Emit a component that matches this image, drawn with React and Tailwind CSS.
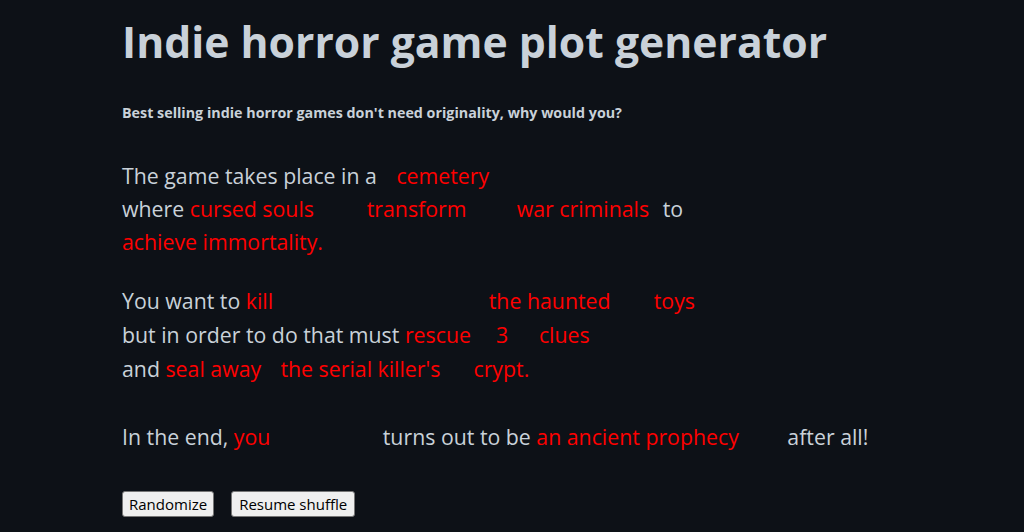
import React from "react"

function Slot({ w, children }) {
    return (
        <span className={`inline-block align-baseline text-[#ff0000] whitespace-nowrap ${w}`}>{children}</span>
    )
}

export default function App() {
    return (
        <div className="min-h-screen bg-[#0d1117] text-[#c9d1d9]" style={{ fontFamily: '"Open Sans", "Noto Sans", sans-serif' }}>
            <main className="max-w-[780px] mx-auto pt-[14px]">
                <h1 className="text-[42.7px] font-bold leading-[56px]">Indie horror game plot generator</h1>
                <p className="text-[14.3px] font-bold mt-[32px]">Best selling indie horror games don't need originality, why would you?</p>

                {/* setting */}
                <div className="mt-[36px] text-[21.3px] leading-[33px]">
                    <div>The game takes place in a <span className="ml-[14px]"><Slot w="w-[120px]">cemetery</Slot></span></div>
                    <div>where <Slot w="w-[177px]">cursed souls</Slot><Slot w="w-[150px]">transform</Slot><Slot w="w-[146px]">war criminals</Slot>to</div>
                    <div><Slot w="w-auto">achieve immortality.</Slot></div>
                </div>

                {/* goal */}
                <div className="mt-[26px] text-[21.3px] leading-[34px]">
                    <div>You want to <Slot w="w-[243px]">kill</Slot><Slot w="w-[165px]">the haunted</Slot><Slot w="w-auto">toys</Slot></div>
                    <div>but in order to do that must <Slot w="w-[91px]">rescue</Slot><Slot w="w-[43px]">3</Slot><Slot w="w-auto">clues</Slot></div>
                    <div>and <Slot w="w-[115px]">seal away</Slot><Slot w="w-[193px]">the serial killer's</Slot><Slot w="w-auto">crypt.</Slot></div>
                </div>

                {/* ending */}
                <div className="mt-[34px] text-[21.3px] leading-[33px]">
                    <div>In the end, <Slot w="w-[149px]">you</Slot>turns out to be <Slot w="w-[251px]">an ancient prophecy</Slot>after all!</div>
                </div>

                <div className="mt-[38px] flex gap-[17px]">
                    <button className="h-[26px] px-[6px] bg-[#efefef] text-black border border-[#767676] rounded-[3px] text-[15px] leading-none">Randomize</button>
                    <button className="h-[26px] px-[7px] bg-[#efefef] text-black border border-[#767676] rounded-[3px] text-[15px] leading-none">Resume shuffle</button>
                </div>
            </main>
        </div>
    )
}
